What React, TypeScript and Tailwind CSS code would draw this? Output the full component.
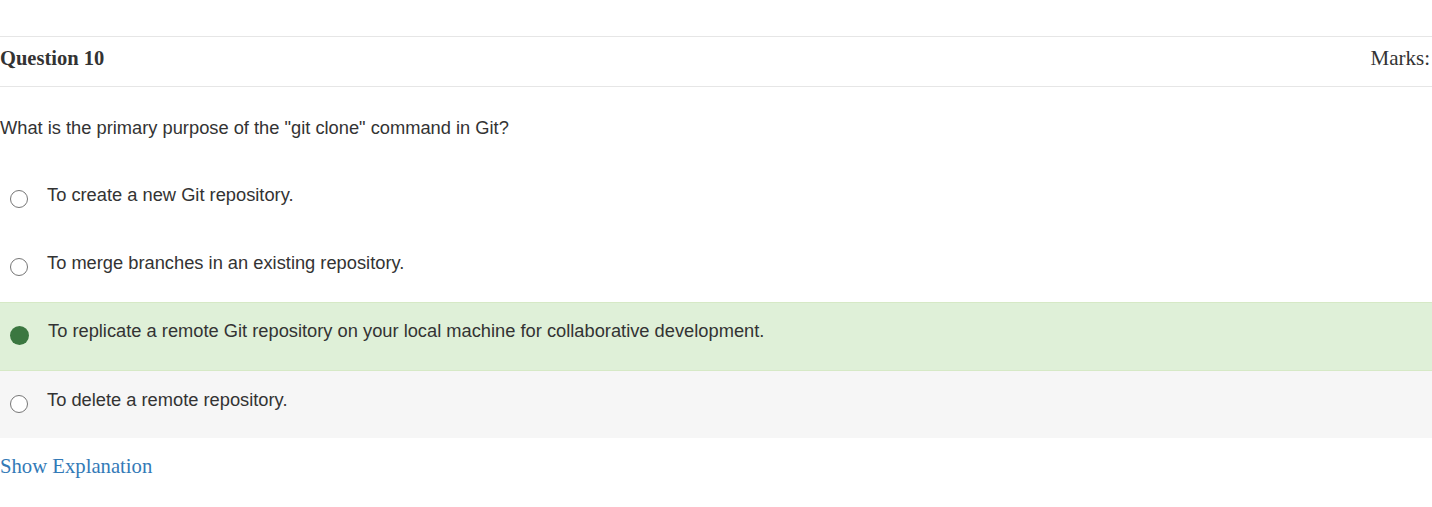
import React from 'react';

const options = [
  { id: 1, text: 'To create a new Git repository.', state: 'none' },
  { id: 2, text: 'To merge branches in an existing repository.', state: 'none' },
  { id: 3, text: 'To replicate a remote Git repository on your local machine for collaborative development.', state: 'correct' },
  { id: 4, text: 'To delete a remote repository.', state: 'muted' },
];

const Radio = ({ checked }: { checked: boolean }) =>
  checked ? (
    <span className="mt-[7px] block h-[19px] w-[19px] shrink-0 rounded-full bg-[#3b7740]" />
  ) : (
    <span className="mt-[7px] block h-[18px] w-[18px] shrink-0 rounded-full border-[1.5px] border-[#767676] bg-white" />
  );

export default function App() {
  return (
    <div className="min-h-[507px] w-[1432px] bg-white pt-[36px] text-[#333] [font-family:'Liberation_Sans',Arial,sans-serif]">
      <div className="flex h-[51px] items-start justify-between border-y border-[#e6e6e6] pt-[9px] leading-[24px] [font-family:'Liberation_Serif','Times_New_Roman',serif]">
        <h3 className="text-[20.5px] font-bold">Question 10</h3>
        <span className="pr-[2px] text-[21px]">Marks:</span>
      </div>

      <p className="pt-[29px] pb-[26px] text-[18.3px] leading-[24px]">
        What is the primary purpose of the "git clone" command in Git?
      </p>

      <div>
        {options.map((o) => (
          <div
            key={o.id}
            className={
              o.state === 'correct'
                ? 'flex h-[69px] gap-[19px] border-y border-[#d6e9c6] bg-[#dff0d8] pt-[16px] pl-[10px]'
                : o.state === 'muted'
                ? 'flex h-[67px] gap-[19px] bg-[#f6f6f6] pt-[17px] pl-[10px]'
                : 'flex h-[68px] gap-[19px] pt-[17px] pl-[10px]'
            }
          >
            <Radio checked={o.state === 'correct'} />
            <span className="text-[18.3px] leading-[24px]">{o.text}</span>
          </div>
        ))}
      </div>

      <a
        href="#"
        className="mt-[13px] block text-[20.7px] text-[#337ab7] [font-family:'Liberation_Serif','Times_New_Roman',serif]"
      >
        Show Explanation
      </a>
    </div>
  );
}
